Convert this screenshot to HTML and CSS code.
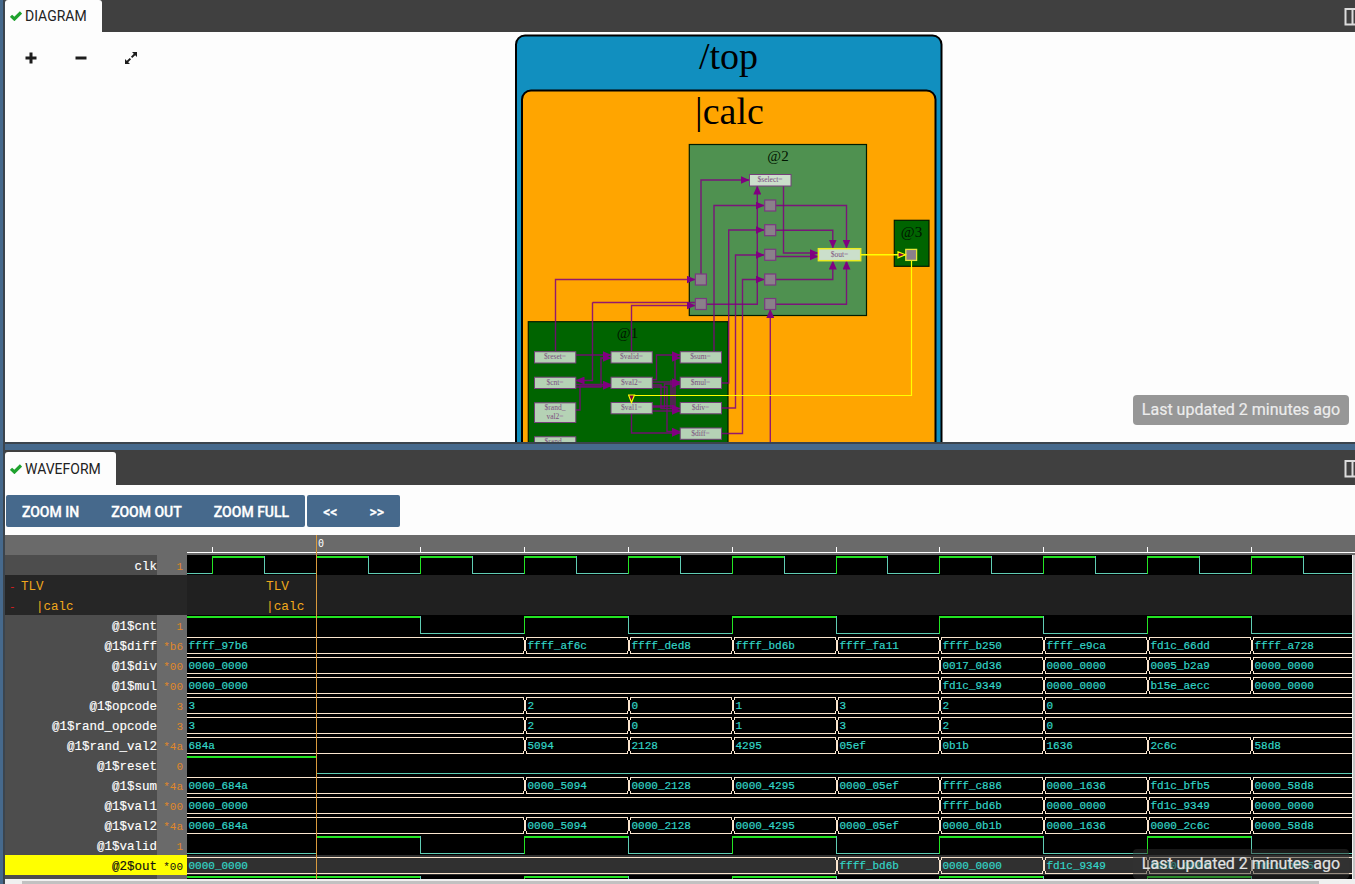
FILE: index.html
```html
<!DOCTYPE html>
<html lang="en">
<head>
<meta charset="utf-8">
<title>Diagram and Waveform</title>
<link rel="stylesheet" href="styles.css">
</head>
<body>
<div class="app">
  <div class="gutter"></div>
  <main class="panes">
    <header class="tabbar">
      <div class="tab tab-diagram"><svg class="check" viewBox="0 0 12 10"><path d="M1 4.800 4.400 8 11 1.400"/></svg><span>DIAGRAM</span></div>
      <svg class="split-icon" viewBox="0 0 11 18"><path d="M12 1H1.500V16.500H12M8.500 1V16.500"/></svg>
    </header>
    <section class="diagram">
      <svg class="graph" viewBox="5 32 1350 410">
        <defs>
          <marker id="ah" markerUnits="userSpaceOnUse" markerWidth="9" markerHeight="8" refX="8.500" refY="4" orient="auto"><path class="head" d="M0 0 9 4 0 8Z"/></marker>
          <marker id="yh" markerUnits="userSpaceOnUse" markerWidth="10" markerHeight="8" refX="8.500" refY="4" orient="auto"><path class="yhead" d="M1 1 8.500 4 1 7Z"/></marker>
        </defs>
        <rect class="scope top" x="516" y="35.500" width="425.500" height="440" rx="9"/>
        <rect class="scope pipe" x="522" y="90.500" width="413.500" height="400" rx="9"/>
        <text class="big" x="728.500" y="68.500">/top</text>
        <text class="big" x="729.500" y="123.500">|calc</text>
        <rect class="stage light" x="689.300" y="144.500" width="177.200" height="171"/>
        <rect class="stage" x="894.300" y="220.300" width="34.700" height="46"/>
        <rect class="stage" x="528.300" y="321.700" width="199.700" height="130"/>
        <text class="st" x="778" y="161">@2</text>
        <text class="st" x="911.500" y="237">@3</text>
        <text class="st" x="627.500" y="337.500">@1</text>

        <g class="edge arrows">
          <path d="M701 274V180H749"/>
          <path d="M714 351V205.500H764"/>
          <path d="M721.500 383H728.700V230H764"/>
          <path d="M721.500 408H735.500V255H764"/>
          <path d="M721.500 433.500H742.500V279.500H764"/>
          <path d="M706.500 304.300H757.300V186"/>
          <path d="M783.500 186V253H818"/>
          <path d="M775.500 256.500H818"/>
          <path d="M775.500 205.500H846.500V248"/>
          <path d="M775.500 230.300H832.800V248"/>
          <path d="M775.500 279.500H832.800V261"/>
          <path d="M775.500 304.300H846.500V261"/>
          <path d="M770.300 443V309.500"/>
          <path d="M555.500 351V279.500H695"/>
          <path d="M631.500 351V305.500H695"/>
          <path d="M592.500 302.500V380.500H576"/>
          <path d="M576 355H611"/>
          <path d="M576 387H601V358H611"/>
          <path d="M576 384.500H611"/>
          <path d="M576 410H580V386H611"/>
          <path d="M652 379.500H656.500V355H680"/>
          <path d="M652 382H680"/>
          <path d="M652 406H675V358H680"/>
          <path d="M652 411H680"/>
          <path d="M652 385H661V408.500H680"/>
          <path d="M652 407H664.500V384H680"/>
          <path d="M631.500 414V433H680"/>
          <path d="M652 387H667V431.500H680"/>
        </g>
        <g class="edge">
          <path d="M592.500 302.500H695M671 380V409M673 382V411"/>
        </g>
        <g class="node">
          <rect x="749.500" y="174.500" width="41.500" height="11.500"/>
          <rect x="534.500" y="351.700" width="41.300" height="11.300"/>
          <rect x="534.500" y="377.200" width="41.300" height="11.300"/>
          <rect x="534.500" y="402.800" width="41.300" height="19.700"/>
          <rect x="534.500" y="436.800" width="41.300" height="19.700"/>
          <rect x="611" y="351.700" width="41.300" height="11.300"/>
          <rect x="611" y="377.200" width="41.300" height="11.300"/>
          <rect x="611" y="402.500" width="41.300" height="11.300"/>
          <rect x="680.200" y="351.700" width="41.300" height="11.300"/>
          <rect x="680.200" y="377.200" width="41.300" height="11.300"/>
          <rect x="680.200" y="402.500" width="41.300" height="11.300"/>
          <rect x="680.200" y="428" width="41.300" height="11.300"/>
          <rect class="active" x="818.400" y="248.700" width="42.300" height="12"/>
        </g>
        <g class="reg">
          <rect x="764.700" y="200" width="11" height="11"/>
          <rect x="764.700" y="224.700" width="11" height="11"/>
          <rect x="764.700" y="249.300" width="11" height="11"/>
          <rect x="764.700" y="274" width="11" height="11"/>
          <rect x="764.700" y="298.500" width="11" height="11"/>
          <rect x="695.400" y="274" width="11" height="11"/>
          <rect x="695.400" y="298.500" width="11" height="11"/>
          <rect class="active" x="905.800" y="249.400" width="10.800" height="11"/>
        </g>
        <g class="sig">
          <text x="770" y="181.700">$select<tspan>=</tspan></text>
          <text x="839.500" y="257">$out<tspan>=</tspan></text>
          <text x="555" y="359">$reset<tspan>=</tspan></text>
          <text x="555" y="385">$cnt<tspan>=</tspan></text>
          <text x="555" y="410.300">$rand_</text>
          <text x="555" y="419">val2<tspan>=</tspan></text>
          <text x="555" y="443.500">$rand_</text>
          <text x="631.500" y="359">$valid<tspan>=</tspan></text>
          <text x="631.500" y="385">$val2<tspan>=</tspan></text>
          <text x="631.500" y="410">$val1<tspan>=</tspan></text>
          <text x="700.500" y="359">$sum<tspan>=</tspan></text>
          <text x="700.500" y="385">$mul<tspan>=</tspan></text>
          <text x="700.500" y="410">$div<tspan>=</tspan></text>
          <text x="700.500" y="436">$diff<tspan>=</tspan></text>
        </g>
        <g class="hot">
          <path class="thick" d="M861 254.800H905.500"/>
          <path d="M911.500 261V395.500H631.500V402.500"/>
        </g>
      </svg>
      <div class="tools">
        <svg viewBox="0 0 12 12"><path class="bold" d="M6 .5V11.500M.5 6H11.500"/></svg>
        <svg viewBox="0 0 12 12"><path class="bold" d="M.5 6H11.500"/></svg>
        <svg viewBox="0 0 12 12"><path class="fine" d="M6.600 5.400 10 2M5.400 6.600 2 10"/><path d="M7 0H12V5ZM0 7V12H5Z"/></svg>
      </div>
      <div class="toast">Last updated 2 minutes ago</div>
    </section>
    <div class="splitter"></div>
    <header class="tabbar tabbar-lower">
      <div class="tab tab-wave"><svg class="check" viewBox="0 0 12 10"><path d="M1 4.800 4.400 8 11 1.400"/></svg><span>WAVEFORM</span></div>
      <svg class="split-icon" viewBox="0 0 11 18"><path d="M12 1H1.500V16.500H12M8.500 1V16.500"/></svg>
    </header>
    <section class="waveform">
      <nav class="buttons">
        <div class="group zoom"><button>ZOOM IN</button><button>ZOOM OUT</button><button>ZOOM FULL</button></div>
        <div class="group pan"><button>&lt;&lt;</button><button>&gt;&gt;</button></div>
      </nav>
      <div class="viewer">
        <div class="names">
          <div class="ruler-pad"></div>
          <div class="row"><span class="name">clk</span><span class="val">1</span></div>
          <div class="row scope-row"><i>-</i><b>TLV</b></div>
          <div class="row scope-row nested"><i>-</i><b>|calc</b></div>
          <div class="row"><span class="name">@1$cnt</span><span class="val">1</span></div>
          <div class="row"><span class="name">@1$diff</span><span class="val">*b6</span></div>
          <div class="row"><span class="name">@1$div</span><span class="val">*00</span></div>
          <div class="row"><span class="name">@1$mul</span><span class="val">*00</span></div>
          <div class="row"><span class="name">@1$opcode</span><span class="val">3</span></div>
          <div class="row"><span class="name">@1$rand_opcode</span><span class="val">3</span></div>
          <div class="row"><span class="name">@1$rand_val2</span><span class="val">*4a</span></div>
          <div class="row"><span class="name">@1$reset</span><span class="val">0</span></div>
          <div class="row"><span class="name">@1$sum</span><span class="val">*4a</span></div>
          <div class="row"><span class="name">@1$val1</span><span class="val">*00</span></div>
          <div class="row"><span class="name">@1$val2</span><span class="val">*4a</span></div>
          <div class="row"><span class="name">@1$valid</span><span class="val">1</span></div>
          <div class="row selected"><span class="name">@2$out</span><span class="val">*00</span></div>
          <div class="row last"><span class="name"></span><span class="val"></span></div>
        </div>
        <svg class="waves" id="waves" viewBox="187 535 1168 344"></svg>
        <div class="vscroll"></div>
        <div class="toast toast-wave">Last updated 2 minutes ago</div>
      </div>
      <div class="hscroll"><div class="thumb"></div></div>
    </section>
  </main>
</div>
<script src="waves.js"></script>
</body>
</html>
```
FILE: styles.css
```css
* { box-sizing: border-box; }
body { margin: 0; background: #fdfdfd; font-family: Roboto, "Liberation Sans", sans-serif; overflow: hidden; }
.app { display: flex; width: 1355px; height: 884px; overflow: hidden; }
.gutter { width: 5px; flex: none; background: #46698c; border-right: 2px solid #3b444d; }
.panes { width: 1350px; flex: none; display: flex; flex-direction: column; background: #fdfdfd; }

.tabbar { height: 32px; flex: none; display: flex; justify-content: space-between; background: #404040; }
.tabbar-lower { height: 35px; padding-top: 2px; }
.tab { display: flex; align-items: center; gap: 3px; height: 100%; padding-left: 5px; background: #fdfdfd; border-radius: 3px 3px 0 0; font-size: 14px; color: #222; }
.tab-diagram { width: 97px; }
.tab-wave { width: 111px; padding-top: 1px; }
.check { width: 12px; height: 10px; flex: none; fill: none; stroke: #1fa22e; stroke-width: 3.200; }
.split-icon { width: 11px; height: 18px; margin-top: 8px; fill: none; stroke: #dcdcdc; stroke-width: 2; }

.diagram { position: relative; height: 410px; flex: none; overflow: hidden; }
.graph { display: block; width: 1350px; height: 410px; font-family: "Liberation Serif", serif; text-anchor: middle; }
.scope { stroke: #000; stroke-width: 2; }
.top { fill: #118fbf; }
.pipe { fill: #ffa500; }
.stage { fill: #006400; stroke: #001c00; stroke-width: 1.200; }
.light { fill: #4f9150; }
.big { font-size: 38px; }
.st { font-size: 15px; fill: #001500; }
.edge path { fill: none; stroke: #800080; stroke-opacity: .85; stroke-width: 1.400; }
.arrows path { marker-end: url(#ah); }
.edge .head, .head { fill: #800080; stroke: none; }
.node rect { fill: #b5d2b5; stroke: #75407a; stroke-width: 1; }
.node rect:first-child { fill: #cbdfcb; }
.node .active { fill: #cbdfcb; stroke: #ecec20; stroke-width: 1.500; }
.reg rect { fill: #8a808a; stroke: #7a3a80; stroke-width: 1.200; }
.reg .active { stroke: #e6e63a; stroke-width: 1.300; }
.sig { font-size: 7.500px; fill: #7c4f80; }
.sig tspan { fill: #a58fa8; }
.hot path { fill: none; stroke: #ffff00; stroke-width: 1.200; marker-end: url(#yh); }
.hot .thick { stroke-width: 1.600; }
.yhead { fill: #800040; stroke: #ffff00; stroke-width: 1.200; }
.tools { position: absolute; left: 20px; top: 20px; display: flex; gap: 38px; }
.tools svg { width: 12px; height: 12px; fill: #1c1c1c; }
.tools .bold { stroke: #1c1c1c; stroke-width: 3; }
.tools .fine { stroke: #1c1c1c; stroke-width: 1.900; }
.toast { position: absolute; left: 1128px; top: 363px; width: 216px; height: 30px; border-radius: 4px; background: rgba(50, 50, 50, .5); color: #ececec; font-size: 16px; line-height: 29px; text-align: center; white-space: nowrap; -webkit-text-stroke: .2px; }
.toast-wave { top: 314px; color: #e2e2e2; }

.splitter { height: 8px; flex: none; background: #46698c; border-top: 2px solid #3b444d; }
.waveform { height: 399px; flex: none; display: flex; flex-direction: column; padding-top: 10px; }
.buttons { display: flex; gap: 2px; padding-left: 1px; height: 40px; flex: none; }
.group { display: flex; height: 32px; background: #46698c; border-radius: 2px; }
.group button { border: 0; padding: 1px 0 0; background: none; color: #fff; font: 500 14px Roboto, sans-serif; text-align: center; -webkit-text-stroke: .3px; }
.zoom { width: 299px; }
.zoom button:nth-child(1) { width: 89px; }
.zoom button:nth-child(2) { width: 103px; }
.zoom button:nth-child(3) { width: 107px; }
.pan { width: 93px; }
.pan button { width: 46.500px; }

.viewer { position: relative; display: flex; height: 344px; flex: none; overflow: hidden; font-family: "Liberation Mono", monospace; }
.viewer .toast { font-family: Roboto, sans-serif; }
.names { width: 182px; flex: none; }
.ruler-pad { height: 20px; background: #6a6a6a; }
.row { display: flex; height: 20px; line-height: 24px; font-size: 12.500px; color: #fff; }
.name { width: 152px; text-align: right; background: #4d4d4d; -webkit-text-stroke: .15px; }
.val { width: 30px; padding-right: 4px; text-align: right; font-size: 11px; color: #e0882a; background: #6a6a6a; }
.scope-row { background: #262626; color: #f0a81c; padding-left: 4px; }
.scope-row i { width: 12px; font-style: normal; font-size: 11px; color: #d62020; }
.scope-row b { font-weight: normal; }
.nested i { width: 27px; }
.selected { color: #111; }
.selected .name, .selected .val { background: #ffff00; color: #111; }
.waves { width: 1168px; height: 344px; flex: none; display: block; background: #000; font-family: "Liberation Mono", monospace; }
.w-ruler { fill: #6a6a6a; }
.w-white { fill: #fff; }
.w-zero { fill: #fff; font: 10px "DejaVu Sans Mono", monospace; }
.w-scope { fill: #202020; }
.w-selected { fill: #303030; }
.w-title { fill: #f0a81c; font-size: 12.800px; }
.w-high { fill: #23e423; }
.w-low { fill: #60ccb4; }
.w-bus { fill: #fbe6cf; }
.w-data { fill: #33d6c8; font-size: 11px; stroke: #33d6c8; stroke-width: .2px; }
.w-cursor { fill: #d99a3c; }
.vscroll { position: absolute; right: 0; top: 20px; width: 3px; height: 324px; background: #f0f0f0; border-right: 2px solid #c4c4c4; }
.hscroll { height: 5px; flex: none; background: #f0f0f0; padding: 2px 0 0 17px; }
.thumb { width: 1297px; height: 3px; background: #c1c1c1; }
```
FILE: waves.js
```js
// Draws the signal traces. Change points are [clock cycle, value] pairs.
const NS = 'http://www.w3.org/2000/svg';
const svg = document.getElementById('waves');
const LEFT = 187, RIGHT = 1352, ZERO = 316, STEP = 103.9;
const at = c => c < -1.1 ? LEFT : Math.round(ZERO + c * STEP);

function rect(cls, x, y, w, h) {
  const r = document.createElementNS(NS, 'rect');
  r.setAttribute('class', cls);
  r.setAttribute('x', x); r.setAttribute('y', y);
  r.setAttribute('width', w); r.setAttribute('height', h);
  svg.appendChild(r);
}
function text(cls, x, y, s) {
  const t = document.createElementNS(NS, 'text');
  t.setAttribute('class', cls);
  t.setAttribute('x', x); t.setAttribute('y', y);
  t.textContent = s;
  svg.appendChild(t);
}
function bit(y, points) {
  points.forEach(([c, v], i) => {
    const x = at(c), end = i + 1 < points.length ? at(points[i + 1][0]) : RIGHT;
    if (i) rect(v ? 'w-high' : 'w-low', x, y + 1, 1, 18);
    rect(v ? 'w-high' : 'w-low', x, v ? y + 1 : y + 18, end - x + (v ? 1 : 0), v ? 2 : 1);
  });
}
function bus(y, points) {
  points.forEach(([c, v], i) => {
    const x = at(c), end = i + 1 < points.length ? at(points[i + 1][0]) : RIGHT + 3;
    const from = i ? x + 2 : x;
    rect('w-bus', from, y + 2, end - from, 1);
    rect('w-bus', from, y + 18, end - from, 1);
    if (i) {
      rect('w-bus', x, y + 5, 2, 11);
      for (const hx of [x - 1, x + 2]) {
        rect('w-bus', hx, y + 2, 1, 3);
        rect('w-bus', hx, y + 16, 1, 3);
      }
    }
    text('w-data', i ? x + 3.5 : x + 1.5, y + 14, v);
  });
}
const S = -9;
const toggles = first => [...first, [2, 1], [3, 0], [4, 1], [5, 0], [6, 1], [7, 0], [8, 1], [9, 0]];
const series = (first, list) => [[S, first], ...list.map((v, i) => [i + 2, v])];
const op = [[S, '3'], [2, '2'], [3, '0'], [4, '1'], [5, '3'], [6, '2'], [7, '0']];
const clk = [[S, 0]];
for (let c = -1; c < 10; c++) clk.push([c, 1], [c + 0.5, 0]);

rect('w-ruler', LEFT, 535, 1168, 20);
rect('w-white', LEFT, 552, 1168, 1);
for (let c = -1; c < 10; c++) if (c) rect('w-white', at(c), 547, 1, 5);
text('w-zero', 318, 547, '0');
rect('w-scope', LEFT, 575, 1168, 40);
rect('w-selected', LEFT, 855, 1168, 20);
text('w-title', 266, 590, 'TLV');
text('w-title', 266, 610, '|calc');
bit(555, clk.filter(p => p[0] < 9.9));
bit(615, toggles([[S, 1], [1, 0]]));
bus(635, series('ffff_97b6', ['ffff_af6c', 'ffff_ded8', 'ffff_bd6b', 'ffff_fa11', 'ffff_b250', 'ffff_e9ca', 'fd1c_66dd', 'ffff_a728']));
bus(655, [[S, '0000_0000'], [6, '0017_0d36'], [7, '0000_0000'], [8, '0005_b2a9'], [9, '0000_0000']]);
bus(675, [[S, '0000_0000'], [6, 'fd1c_9349'], [7, '0000_0000'], [8, 'b15e_aecc'], [9, '0000_0000']]);
bus(695, op);
bus(715, op);
bus(735, series('684a', ['5094', '2128', '4295', '05ef', '0b1b', '1636', '2c6c', '58d8']));
bit(755, [[S, 1], [0, 0]]);
bus(775, series('0000_684a', ['0000_5094', '0000_2128', '0000_4295', '0000_05ef', 'ffff_c886', '0000_1636', 'fd1c_bfb5', '0000_58d8']));
bus(795, [[S, '0000_0000'], [6, 'ffff_bd6b'], [7, '0000_0000'], [8, 'fd1c_9349'], [9, '0000_0000']]);
bus(815, series('0000_684a', ['0000_5094', '0000_2128', '0000_4295', '0000_05ef', '0000_0b1b', '0000_1636', '0000_2c6c', '0000_58d8']));
bit(835, toggles([[S, 0], [0, 1], [1, 0]]));
bus(855, [[S, '0000_0000'], [5, 'ffff_bd6b'], [6, '0000_0000'], [7, 'fd1c_9349'], [8, '0000_0000'], [9, 'fd1c_bfb5']]);
bit(875, toggles([[S, 1], [1, 0]]));
rect('w-cursor', ZERO, 535, 1, 344);
```
